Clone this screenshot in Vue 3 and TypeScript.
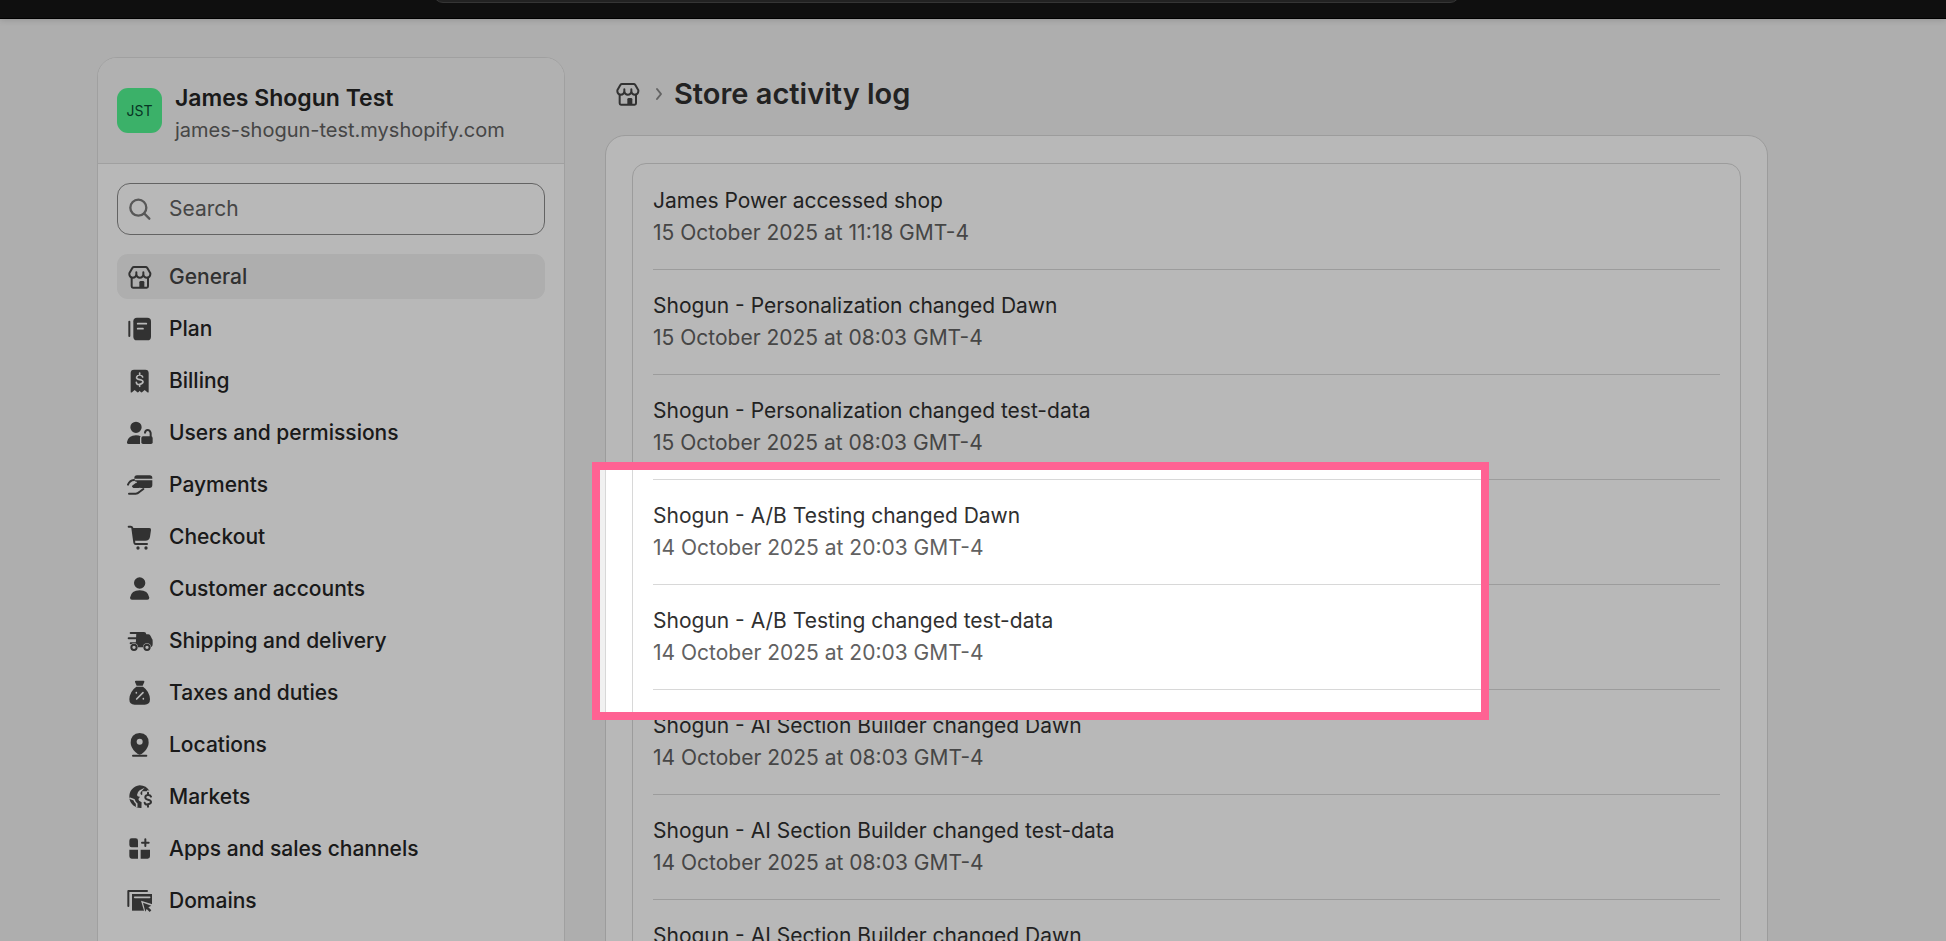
<script setup lang="ts">
interface Shape {
  d: string
  kind: 'fill' | 'line' | 'cut' | 'gap'
}
interface NavItem {
  label: string
  icon: Shape[]
}
interface LogEntry {
  title: string
  time: string
}

const store: Shape[] = [
  { kind: 'line', d: 'M7 28v3a10.5 10 0 0 0 21 0v-6M28 31a10.5 10 0 0 0 21 0v-6M49 31a10.5 10 0 0 0 21 0v-3L61 12q-2-3-5-3H21q-3 0-5 3L7 28' },
  { kind: 'line', d: 'M14 41v26q0 4 4 4h41q4 0 4-4V41' },
  { kind: 'fill', d: 'M37 72V55q0-4 4-4h7q4 0 4 4v17z' },
]

const navItems: NavItem[] = [
  { label: 'General', icon: store },
  {
    label: 'Plan',
    icon: [
      { kind: 'line', d: 'M7 17v43' },
      { kind: 'fill', d: 'M30 5h31q11 0 11 11v46q0 11-11 11H30q-11 0-11-11V16Q19 5 30 5z' },
      { kind: 'cut', d: 'M32 23h26M32 38h16' },
    ],
  },
  {
    label: 'Billing',
    icon: [
      { kind: 'fill', d: 'M21 5h34q10 0 10 10v56q0 4-4 2l-8-7-8 7q-2 1-4-1l-3-4-3 4q-2 2-4 1l-8-7-8 7q-4 2-4-2V15Q11 5 21 5z' },
      { kind: 'cut', d: 'M47 27q-2-6-9-6t-9 6 9 8 10 7-10 7-10-6M38 15v6M38 49v6' },
    ],
  },
  {
    label: 'Users and permissions',
    icon: [
      { kind: 'fill', d: 'M27 5a17 17 0 1 1 0 34a17 17 0 1 1 0-34zM0 66Q4 46 27 46q9 0 14 3-2 2-2 5v18H5q-6 0-5-6z' },
      { kind: 'fill', d: 'M48 49h24q5 0 5 5v13q0 5-5 5H48q-5 0-5-5V54q0-5 5-5z' },
      { kind: 'line', d: 'M54 38q1-8 8-8t9 9v12' },
    ],
  },
  {
    label: 'Payments',
    icon: [
      { kind: 'fill', d: 'M30 10h38q8 0 8 8v2H22v-2q0-8 8-8zM22 25h54v14q0 9-9 9H43L24 46q-9-1-5-6l8-7z' },
      { kind: 'cut', d: 'M5 43q8-12 22-12l-10 10' },
      { kind: 'line', d: 'M3 38q5-13 18-14M6 65h20q6 0 11-5l12-9' },
      { kind: 'line', d: 'M18 43l9-7M20 45h14' },
    ],
  },
  {
    label: 'Checkout',
    icon: [
      { kind: 'line', d: 'M5 8h6q4 0 5 4l6 44q1 4 4 4h34' },
      { kind: 'fill', d: 'M17 12h50q6 0 5 6l-3 20q-2 12-14 12H22zM33 67a5 5 0 1 1 0 10a5 5 0 1 1 0-10zM57 67a5 5 0 1 1 0 10a5 5 0 1 1 0-10z' },
    ],
  },
  {
    label: 'Customer accounts',
    icon: [{ kind: 'fill', d: 'M38 4a17 17 0 1 1 0 34a17 17 0 1 1 0-34zM9 65Q13 43 38 43t29 22q0 6-6 6H15q-6 0-6-6z' }],
  },
  {
    label: 'Shipping and delivery',
    icon: [
      { kind: 'fill', d: 'M28 12h23q6 0 7 7h6q5 0 8 7l2 5q4 4 3 10v8q0 9-9 9H26z' },
      { kind: 'line', d: 'M11 15h20M5 31h22M11 46h18v8' },
      { kind: 'gap', d: 'M21 46a12 12 0 1 1 0 24a12 12 0 1 1 0-24zM60 46a12 12 0 1 1 0 24a12 12 0 1 1 0-24z' },
      { kind: 'line', d: 'M21 50a8 8 0 1 1 0 16a8 8 0 1 1 0-16zM60 50a8 8 0 1 1 0 16a8 8 0 1 1 0-16z' },
    ],
  },
  {
    label: 'Taxes and duties',
    icon: [
      { kind: 'fill', d: 'M27 2h22q4 0 3 4l-5 11H29L24 6q-1-4 3-4zM28 20h20q20 14 21 38 0 16-16 16H23Q7 74 7 58 8 34 28 20z' },
      { kind: 'cut', d: 'M29 57l19-19M28 38v1M49 56v1' },
    ],
  },
  {
    label: 'Locations',
    icon: [
      { kind: 'fill', d: 'M38 3q27 2 27 29 0 14-14 28-8 8-13 8t-13-8Q11 46 11 32 11 5 38 3z' },
      { kind: 'gap', d: 'M38 20a9 9 0 1 1 0 18a9 9 0 1 1 0-18z' },
      { kind: 'line', d: 'M18 71h40' },
    ],
  },
  {
    label: 'Markets',
    icon: [
      { kind: 'fill', d: 'M38 4a34 34 0 0 1 30 18H46l-2 50A34 34 0 1 1 38 4z' },
      { kind: 'gap', d: 'M53 11L38 19q-8 6-8 14 1 6 9 5-7 6-3 12l8 5v20h34V26l-16-8-6 10q-4 6-12 5-6-2-3-8z' },
      { kind: 'cut', d: 'M9 43l12 4q2 8 8 12v9' },
      { kind: 'line', d: 'M72 38q-2-5-9-5t-8 6 8 8 9 7-9 7-10-5M63 26v6M63 62v6' },
    ],
  },
  {
    label: 'Apps and sales channels',
    icon: [
      { kind: 'fill', d: 'M14 7h12q7 0 7 7v20H14q-7 0-7-7V14q0-7 7-7zM7 41h26v27H14q-7 0-7-7zM41 41h28v20q0 7-7 7H41z' },
      { kind: 'line', d: 'M55 10v20M45 20h20' },
    ],
  },
  {
    label: 'Domains',
    icon: [
      { kind: 'line', d: 'M4 54V9h56' },
      { kind: 'fill', d: 'M15 18h60v50H15z' },
      { kind: 'cut', d: 'M23 28h45' },
      { kind: 'gap', d: 'M42 38l34 11v22H52z' },
      { kind: 'fill', d: 'M48 44l25 9-9 5 9 9-5 5-9-9-4 8z' },
    ],
  },
]

const entries: LogEntry[] = [
  { title: 'James Power accessed shop', time: '15 October 2025 at 11:18 GMT-4' },
  { title: 'Shogun - Personalization changed Dawn', time: '15 October 2025 at 08:03 GMT-4' },
  { title: 'Shogun - Personalization changed test-data', time: '15 October 2025 at 08:03 GMT-4' },
  { title: 'Shogun - A/B Testing changed Dawn', time: '14 October 2025 at 20:03 GMT-4' },
  { title: 'Shogun - A/B Testing changed test-data', time: '14 October 2025 at 20:03 GMT-4' },
  { title: 'Shogun - AI Section Builder changed Dawn', time: '14 October 2025 at 08:03 GMT-4' },
  { title: 'Shogun - AI Section Builder changed test-data', time: '14 October 2025 at 08:03 GMT-4' },
  { title: 'Shogun - AI Section Builder changed Dawn', time: '14 October 2025 at 08:03 GMT-4' },
]
</script>

<template>
  <div class="page">
    <header class="topbar"><div class="topbar-field"></div></header>

    <div class="layout">
      <aside class="sidebar">
        <div class="shop">
          <span class="avatar">JST</span>
          <div>
            <div class="shop-name">James Shogun Test</div>
            <div class="shop-domain">james-shogun-test.myshopify.com</div>
          </div>
        </div>

        <div class="sidebar-body">
          <label class="search">
            <svg class="icon" viewBox="0 0 78 78" aria-hidden="true">
              <circle class="search-line" cx="34" cy="35" r="24" />
              <path class="search-line" d="M52 53l15 15" />
            </svg>
            <input type="search" placeholder="Search" aria-label="Search" />
          </label>

          <nav class="nav" aria-label="Settings">
            <a
              v-for="(item, index) in navItems"
              :key="item.label"
              href="#"
              class="nav-item"
              :class="{ active: index === 0 }"
            >
              <svg class="icon" viewBox="0 0 78 78" aria-hidden="true">
                <path v-for="(shape, i) in item.icon" :key="i" :class="shape.kind" :d="shape.d" />
              </svg>
              <span>{{ item.label }}</span>
            </a>
          </nav>
        </div>
      </aside>

      <main class="main">
        <div class="heading">
          <a href="#" class="home" aria-label="General">
            <svg class="icon" viewBox="0 0 78 78" aria-hidden="true">
              <path v-for="(shape, i) in store" :key="i" :class="shape.kind" :d="shape.d" />
            </svg>
          </a>
          <svg class="chevron" viewBox="0 0 8 14" aria-hidden="true"><path d="M2 2l4 5-4 5" /></svg>
          <h1>Store activity log</h1>
        </div>

        <section class="card">
          <ul class="log">
            <li v-for="(entry, index) in entries" :key="index">
              <div class="log-title">{{ entry.title }}</div>
              <div class="log-time">{{ entry.time }}</div>
            </li>
          </ul>
        </section>
      </main>
    </div>

    <div class="spotlight" aria-hidden="true"></div>
  </div>
</template>

<style>
body {
  margin: 0;
}
</style>

<style scoped>
* {
  box-sizing: border-box;
}
.page {
  position: relative;
  height: 100vh;
  overflow: hidden;
  background: #f1f1f1;
  color: #303030;
  font: 400 21px/32px Inter, "Liberation Sans", sans-serif;
}
.topbar {
  display: flex;
  align-items: flex-end;
  height: 19px;
  padding: 0 486px 15px 433px;
  overflow: hidden;
  background: #161616;
  border-bottom: 1px solid #000;
  box-shadow: 0 1px 6px rgba(0, 0, 0, 0.15);
}
.topbar-field {
  flex: 1;
  height: 40px;
  flex-shrink: 0;
  background: #303030;
  border: 1px solid #4a4a4a;
  border-radius: 10px;
}
.layout {
  display: flex;
  align-items: flex-start;
  gap: 40px;
  padding: 38px 178px 0 97px;
}
.sidebar {
  flex: 0 0 468px;
  height: 1100px;
  overflow: hidden;
  background: #fff;
  border: 1px solid #dedede;
  border-radius: 20px;
}
.shop {
  display: flex;
  align-items: flex-start;
  gap: 13px;
  height: 106px;
  padding: 30px 19px 0;
  background: #f5f5f5;
  border-bottom: 1px solid #dedede;
}
.avatar {
  display: grid;
  place-items: center;
  width: 45px;
  height: 45px;
  border-radius: 11px;
  background: #53f692;
  color: #0a4a32;
  font-size: 14px;
}
.shop-name {
  margin-top: -6px;
  color: #242424;
  font-size: 23px;
  font-weight: 600;
}
.shop-domain {
  color: #616161;
  font-size: 20px;
}
.sidebar-body {
  padding: 19px;
}
.search {
  display: flex;
  align-items: center;
  gap: 16px;
  height: 52px;
  padding: 0 9px;
  border: 1px solid #8a8a8a;
  border-radius: 13px;
}
.search input {
  flex: 1;
  min-width: 0;
  padding: 0;
  border: 0;
  outline: 0;
  background: transparent;
  color: #303030;
  font: inherit;
}
.search input::placeholder {
  color: #616161;
  opacity: 1;
}
.search-line {
  fill: none;
  stroke: #7a7a7a;
  stroke-width: 7;
  stroke-linecap: round;
}
.nav {
  display: flex;
  flex-direction: column;
  gap: 7px;
  margin-top: 19px;
}
.nav-item {
  display: flex;
  align-items: center;
  gap: 16px;
  height: 45px;
  padding: 0 10px;
  border-radius: 11px;
  color: #242424;
  font-weight: 550;
  text-decoration: none;
}
.nav-item.active {
  background: #f1f1f1;
  color: #454545;
}
.icon {
  display: block;
  flex: none;
  width: 26px;
  height: 26px;
}
.fill {
  fill: #464646;
}
.gap {
  fill: #fff;
}
.line,
.cut {
  fill: none;
  stroke: #464646;
  stroke-width: 6;
  stroke-linecap: round;
  stroke-linejoin: round;
}
.cut {
  stroke: #fff;
  stroke-width: 5;
}
.main {
  flex: 1;
  min-width: 0;
}
.heading {
  display: flex;
  align-items: center;
  height: 78px;
  padding: 0 10px 4px;
}
.chevron {
  width: 8px;
  height: 14px;
  margin: 0 11px 0 14px;
  fill: none;
  stroke: #8a8a8a;
  stroke-width: 2;
  stroke-linecap: round;
  stroke-linejoin: round;
}
h1 {
  margin: 0;
  color: #303030;
  font-size: 29px;
  font-weight: 600;
  line-height: 36px;
}
.card {
  padding: 27px 26px;
  background: #fff;
  border: 1px solid #d8d8d8;
  border-radius: 20px;
}
.log {
  margin: 0;
  padding: 1px 20px;
  border: 1px solid #d8d8d8;
  border-radius: 14px;
  list-style: none;
}
.log li {
  padding: 20px 0;
  border-bottom: 1px solid #d8d8d8;
}
.log-time {
  color: #616161;
}
/* Dims everything outside the highlighted frame. */
.spotlight {
  position: absolute;
  top: 462px;
  left: 592px;
  width: 897px;
  height: 258px;
  border: 8px solid #ff6293;
  box-shadow: 0 0 0 4000px rgba(0, 0, 0, 0.28);
  pointer-events: none;
}
</style>
